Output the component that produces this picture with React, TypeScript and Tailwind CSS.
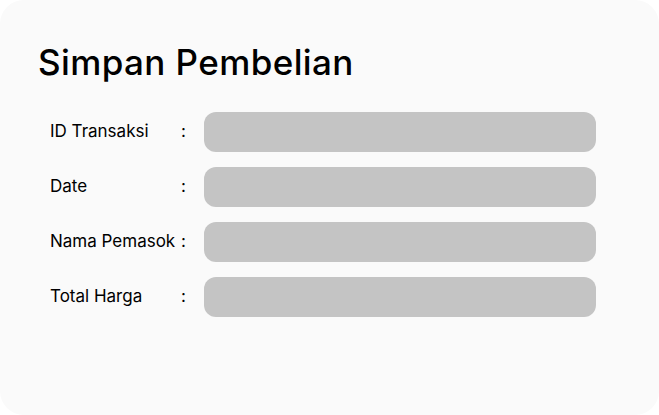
export default function App() {
  const rows = ["ID Transaksi", "Date", "Nama Pemasok", "Total Harga"];
  return (
    <div className="w-[659px] h-[415px] bg-white">
      <div className="w-full h-full bg-[#fafafa] rounded-[24px] flex flex-col" style={{ fontFamily: "Inter, 'Noto Sans', sans-serif" }}>
        <h1 className="pl-[38px] pt-[40px] text-[35px] leading-[44px] font-medium text-black tracking-[0.4px]">
          Simpan Pembelian
        </h1>
        <div className="mt-[28px] flex flex-col gap-[15px]">
          {rows.map((r) => (
            <div key={r} className="flex items-center">
              <div className="w-[204px] shrink-0 pl-[50px] pr-[18px] flex justify-between gap-[4px] text-[17px] text-black">
                <span>{r}</span>
                <span>:</span>
              </div>
              <div className="w-[392px] h-[40px] rounded-[12px] bg-[#c4c4c4]" />
            </div>
          ))}
        </div>
      </div>
    </div>
  );
}
